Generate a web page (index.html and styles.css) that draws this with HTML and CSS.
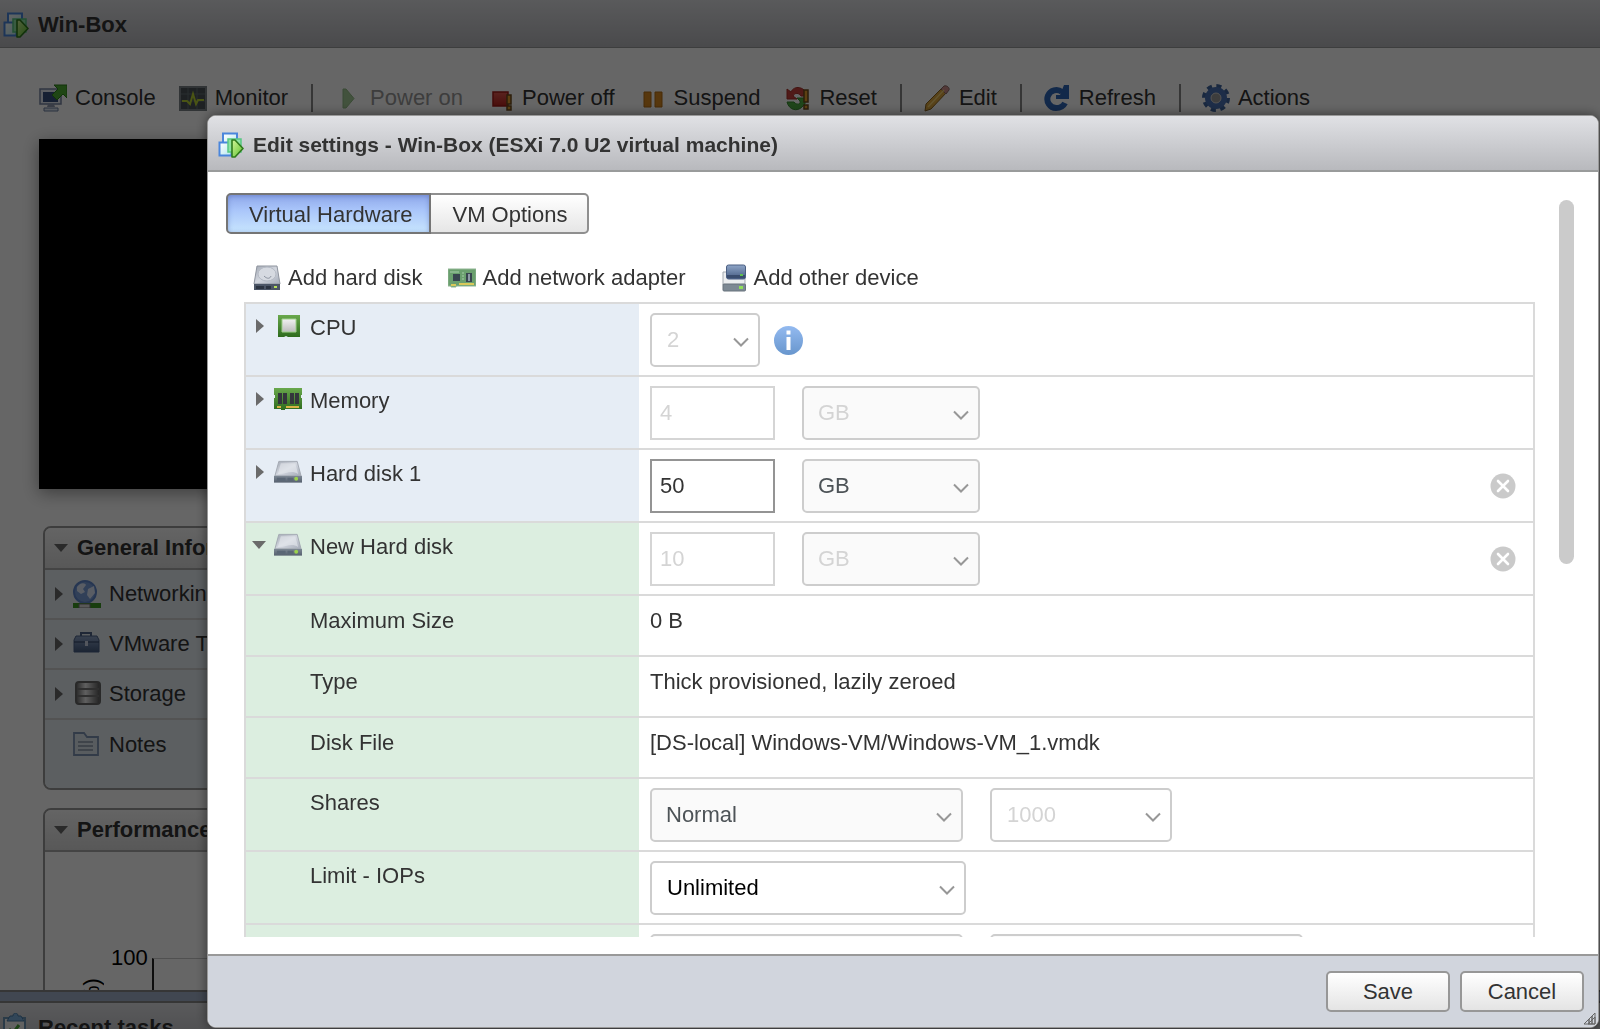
FILE: index.html
```html
<!DOCTYPE html>
<html lang="en">
<head>
<meta charset="utf-8">
<meta name="viewport" content="width=device-width, initial-scale=1">
<title>Win-Box</title>
<link rel="stylesheet" href="styles.css">
</head>
<body>
<svg class="defs" width="0" height="0" aria-hidden="true">
  <defs>
    <linearGradient id="g-lime" x1="0" y1="0" x2="1" y2="1"><stop offset="0" stop-color="#d3f59a"/><stop offset="1" stop-color="#5cc02c"/></linearGradient>
    <linearGradient id="g-ice" x1="0" y1="0" x2="1" y2="1"><stop offset="0" stop-color="#ffffff"/><stop offset="1" stop-color="#b5e6ee"/></linearGradient>
    <linearGradient id="g-metal" x1="0" y1="0" x2="1" y2="1"><stop offset="0" stop-color="#a3a9b4"/><stop offset=".5" stop-color="#d3d7df"/><stop offset="1" stop-color="#a4abb8"/></linearGradient>
    <linearGradient id="g-slate" x1="0" y1="0" x2="0" y2="1"><stop offset="0" stop-color="#7d8894"/><stop offset="1" stop-color="#56606e"/></linearGradient>
    <linearGradient id="g-green" x1="0" y1="0" x2="0" y2="1"><stop offset="0" stop-color="#69a84c"/><stop offset="1" stop-color="#2e6b1d"/></linearGradient>
    <linearGradient id="g-grey" x1="0" y1="0" x2="0" y2="1"><stop offset="0" stop-color="#f2f2f2"/><stop offset="1" stop-color="#bcbcbc"/></linearGradient>
    <linearGradient id="g-blue" x1="0" y1="0" x2="0" y2="1"><stop offset="0" stop-color="#93baf0"/><stop offset="1" stop-color="#6896cd"/></linearGradient>
    <linearGradient id="g-navy" x1="0" y1="0" x2="0" y2="1"><stop offset="0" stop-color="#8fa6c8"/><stop offset="1" stop-color="#445a80"/></linearGradient>
    <linearGradient id="g-drum" x1="0" y1="0" x2="1" y2="0"><stop offset="0" stop-color="#666"/><stop offset=".4" stop-color="#eee"/><stop offset="1" stop-color="#555"/></linearGradient>
    <linearGradient id="g-red" x1="0" y1="0" x2="0" y2="1"><stop offset="0" stop-color="#e05a50"/><stop offset="1" stop-color="#b8231d"/></linearGradient>
  </defs>
  <symbol id="i-vm" viewBox="0 0 26 26">
    <path d="M5 1.500h14v13H5z" fill="url(#g-ice)" stroke="#4a86dc" stroke-width="2"/>
    <path d="M1.500 10.500h12v13h-12z" fill="url(#g-ice)" stroke="#4a86dc" stroke-width="2"/>
    <path d="M10 7h13v13H10z" fill="#8fe3a4" stroke="#58c783" stroke-width="1.500"/>
    <path d="M14 8v17h3l8-8.500L17 8z" fill="url(#g-lime)" stroke="#2f7a1c" stroke-width="1.600" stroke-linejoin="round"/>
  </symbol>
  <symbol id="i-disk" viewBox="0 0 29 24">
    <path d="M5 1h19l4 15H1z" fill="url(#g-metal)" stroke="#a4a9b2" stroke-width="1"/>
    <path d="M7 3h15l3 11c-8-5-13 1-21 0z" fill="#e6e9ef" opacity=".6"/>
    <path d="M0 16h29v7H0z" fill="url(#g-slate)"/>
    <path d="M3 18h9v3H3zM14 18h6v3h-6z" fill="#5a6675"/>
    <circle cx="23" cy="19" r="2" fill="#9bd24c"/>
  </symbol>
  <symbol id="i-right" viewBox="0 0 14 14"><path d="M4 0v14l8-7z" fill="#6a6a6a"/></symbol>
  <symbol id="i-down" viewBox="0 0 14 14"><path d="M0 3h14l-7 8z" fill="#6a6a6a"/></symbol>
  <symbol id="i-chev" viewBox="0 0 16 10"><path d="M1 1.500 8 8.500l7-7" fill="none" stroke="#979797" stroke-width="2"/></symbol>
  <symbol id="i-remove" viewBox="0 0 26 26"><circle cx="13" cy="13" r="12.500" fill="#cacaca"/><path d="m8 8 10 10M18 8 8 18" stroke="#fff" stroke-width="2.600" stroke-linecap="round"/></symbol>
</svg>

<div class="page">
  <header class="titlebar page-title">
    <svg class="icon-vm"><use href="#i-vm"/></svg>
    <h1>Win-Box</h1>
  </header>
  <main class="host">
    <nav class="toolbar" aria-label="Virtual machine">
      <button type="button" class="tool"><svg class="ico" viewBox="0 0 28 28">
        <path d="M1 5h21v15H1z" fill="#e4e9f2" stroke="#7785a4" stroke-width="1.500"/><path d="M4 8h15v10H4z" fill="#37517f"/>
        <path d="M9 20h6l1 3h-8z" fill="#8f9ab0"/><path d="M5 24h14v3H5z" fill="#dbe4f0" stroke="#6c7ea0"/>
        <path d="M15 1h13v13l-4-4-6 6-5-5 6-6z" fill="#4fb034" stroke="#2c7f1a"/></svg>Console</button>
      <button type="button" class="tool"><svg class="ico" viewBox="0 0 28 28">
        <path d="M1 3h26v23H1z" fill="#4b5458" stroke="#7b8387" stroke-width="2"/><path d="M2 10h24M2 17h24M9 4v21M18 4v21" stroke="#657074"/>
        <path d="M3 17h5l3 3 3-10 3 10 2-4h6" fill="none" stroke="#b9d332" stroke-width="2"/></svg>Monitor</button>
      <span class="sep"></span>
      <button type="button" class="tool" disabled><svg class="ico" viewBox="0 0 28 28"><path d="M9 5v19h3l8-9.500-8-9.500z" fill="#8fc07f" stroke="#77aa68"/></svg>Power on</button>
      <button type="button" class="tool"><svg class="ico" viewBox="0 0 28 28"><path d="M7 8h15v14H7z" fill="url(#g-red)" stroke="#a31c18" stroke-width="1.500"/><path d="M21 11h4v9h-4zM21 22h4v4h-4z" fill="#e8a02e" stroke="#6e4b1c" stroke-width="1.500"/></svg>Power off</button>
      <button type="button" class="tool"><svg class="ico" viewBox="0 0 28 28"><path d="M6 8h7v15H6zM17 8h7v15h-7z" fill="#d98a22" stroke="#b36d12"/></svg>Suspend</button>
      <button type="button" class="tool"><svg class="ico" viewBox="0 0 28 28">
        <path d="M4 5v10h10l-4-3c2-4 6-3 8 0h6C22 2 11 1 8 8z" fill="#c8433c" stroke="#a8302a"/>
        <path d="M4 18c2 8 10 10 15 5l3-3v-6h-8l3 3c1 4-4 4-6 1z" fill="#4fae43" stroke="#3a8a33"/>
        <path d="M21 6h4v12h-4zM21 21h4v4h-4z" fill="#e8a02e" stroke="#6e4b1c" stroke-width="1.500"/></svg>Reset</button>
      <span class="sep"></span>
      <button type="button" class="tool"><svg class="ico" viewBox="0 0 28 28"><path d="m2 27 1-7L19 4l5 4L8 25z" fill="#dba53c" stroke="#8a6420"/><path d="m18 5 3-3c3-1 6 2 5 4l-3 4z" fill="#cf8f8c" stroke="#8c6a68"/><path d="m5 23 16-17" stroke="#f5d173" stroke-width="1.500"/></svg>Edit</button>
      <span class="sep"></span>
      <button type="button" class="tool"><svg class="ico" viewBox="0 0 28 28"><path d="M22 19c-2 4-5 5-9 5a9 9 0 1 1 6-16" fill="none" stroke="#2f66b8" stroke-width="6"/><path d="M21 1h5v14H13v-4h4z" fill="#2f66b8"/></svg>Refresh</button>
      <span class="sep"></span>
      <button type="button" class="tool"><svg class="ico" viewBox="0 0 28 28"><circle cx="14" cy="14" r="12" fill="none" stroke="#3f659f" stroke-width="4" stroke-dasharray="5 4.425"/><circle cx="14" cy="14" r="8" fill="#bfc6d3" stroke="#4a72b4" stroke-width="6"/><circle cx="14" cy="14" r="5" fill="#999" stroke="#ccc"/></svg>Actions</button>
    </nav>
    <div class="screen"></div>
    <section class="panel">
      <h2 class="panel-head"><svg class="tri"><use href="#i-down"/></svg>General Information</h2>
      <ul class="facts">
        <li><svg class="tri"><use href="#i-right"/></svg><svg class="ico" viewBox="0 0 28 28"><circle cx="12" cy="12" r="11" fill="#7ba0dd" stroke="#6088cc" stroke-width="2"/><path d="M4 7c4-5 8-4 9-2l-3 4 2 3-4 2-4-3zM15 9l6-3 1 7-5 6-3-4z" fill="#dfe9fb"/><path d="M0 23h28v5H0z" fill="#3c9a24"/><path d="M6 24h11v4H6z" fill="#ddd" stroke="#777"/></svg>Networking</li>
        <li><svg class="tri"><use href="#i-right"/></svg><svg class="ico" viewBox="0 0 28 28"><path d="M8 7V3h10v4" fill="none" stroke="#4e6388" stroke-width="2"/><path d="M3 6h21l2 4v12H1V10z" fill="url(#g-navy)" stroke="#4b6086"/><path d="M1 12h25" stroke="#2d3e60"/><path d="M12 11h3v5h-3z" fill="#cfd8e8"/></svg>VMware Tools</li>
        <li><svg class="tri"><use href="#i-right"/></svg><svg class="ico" viewBox="0 0 28 28"><rect x="3" y="2" width="24" height="22" rx="3" fill="url(#g-drum)" stroke="#666" stroke-width="2"/><path d="M4 9h22M4 16h22" stroke="#777" stroke-width="2"/></svg>Storage</li>
        <li><span class="tri"></span><svg class="ico" viewBox="0 0 28 28"><path d="M1 24V2h10l3 4h11v18z" fill="#dde5ee" stroke="#7d93b3" stroke-width="1.800"/><path d="M5 11h15M5 15h15M5 19h15" stroke="#8b97a8" stroke-width="1.500"/></svg>Notes</li>
      </ul>
    </section>
    <section class="panel chart-panel">
      <h2 class="panel-head"><svg class="tri"><use href="#i-down"/></svg>Performance summary</h2>
      <div class="chart"><span class="axis-name">CPU (%)</span><span class="tick">100</span><span class="plot"></span></div>
    </section>
  </main>
  <div class="splitter"></div>
  <footer class="tasks">
    <div class="titlebar page-title"><svg class="icon-task" viewBox="0 0 24 30"><path d="M1 5h21v24H1z" fill="#f4f4f4" stroke="#6d93b4" stroke-width="2"/><path d="M4 8 7 3h3c0-4 5-4 5 0h3l3 5z" fill="#7db0dc" stroke="#4a7ca8"/><path d="m6 16 4 4 6-8" fill="none" stroke="#4aa83a" stroke-width="3"/></svg><h2>Recent tasks</h2></div>
  </footer>
</div>

<div class="backdrop"></div>
<form class="dialog" role="dialog" aria-labelledby="dlg-title">
  <header class="titlebar dialog-title">
    <svg class="icon-vm"><use href="#i-vm"/></svg>
    <h2 id="dlg-title">Edit settings - Win-Box (ESXi 7.0 U2 virtual machine)</h2>
  </header>
  <div class="dialog-body">
    <div class="pane">
      <div class="tabs" role="tablist">
        <button type="button" class="tab tab-on" role="tab" aria-selected="true">Virtual Hardware</button>
        <button type="button" class="tab" role="tab" aria-selected="false">VM Options</button>
      </div>
      <div class="adders">
        <button type="button" class="add"><svg class="ico" viewBox="0 0 28 28"><path d="M4 2h20l3 18H1z" fill="url(#g-metal)" stroke="#8e949e"/><ellipse cx="14" cy="10" rx="9" ry="7" fill="#d6dae1" stroke="#b4bac4"/><path d="M11 12c3 3 6 3 7 0" fill="none" stroke="#8d94a0"/><path d="M1 20h26v6H1z" fill="#4b5566"/><path d="M3 22h8v3H3zM13 22h5v3h-5z" fill="#2c3442"/><path d="M21 22h3v2h-3z" fill="#b6df5a"/></svg>Add hard disk</button>
        <button type="button" class="add"><svg class="ico" viewBox="0 0 28 28"><path d="M0 5h28v17H8v1H3v-1H0z" fill="#6a9f6e" stroke="#8fb592"/><path d="M5 10h7v7H5zM18 9h6v9h-6z" fill="#38454f"/><path d="M2 8h9M14 9h2M14 12h2M14 15h2" stroke="#a6cda8"/><path d="M11 19h15v2H11zM3 20h5v2H3z" fill="#d9c95a"/><path d="M20 10h2v7h-2z" fill="#8d9aa6"/></svg>Add network adapter</button>
        <button type="button" class="add add-other"><svg class="ico" viewBox="0 0 28 28"><path d="M4 8h22v13H4z" fill="#eceef0" stroke="#a3a9b0"/><rect x="7.500" y="1" width="19" height="14" rx="2" fill="url(#g-navy)" stroke="#4b5f82"/><path d="M8 11h18v3H8z" fill="#3a4d6e"/><path d="M21 10h3v2h-3z" fill="#5fc04c"/><rect x="4" y="20" width="22.500" height="7" rx="1" fill="#7d8994" stroke="#68737d"/><path d="M20 22h4v3h-4z" fill="#8fe05a"/></svg>Add other device</button>
      </div>
      <table class="hw">
        <tbody>
          <tr>
            <th scope="row"><div class="label"><svg class="tri"><use href="#i-right"/></svg><svg class="ico" viewBox="0 0 28 28"><path d="M4 3h22v22H14l-2-1-2 1H4z" fill="url(#g-green)"/><path d="M8 7h14v13H8z" fill="url(#g-grey)" stroke="#9fcf8c"/></svg>CPU</div></th>
            <td><div class="ctl"><span class="sel w-cpu plain"><select aria-label="CPU" disabled><option>2</option></select><svg><use href="#i-chev"/></svg></span><svg class="info" viewBox="0 0 29 29" role="img" aria-label="Information"><circle cx="14.500" cy="14.500" r="14.500" fill="url(#g-blue)"/><path d="M12.500 4.500h4v4h-4zM12.500 11h4v13h-4z" fill="#fff"/></svg></div></td>
          </tr>
          <tr>
            <th scope="row"><div class="label"><svg class="tri"><use href="#i-right"/></svg><svg class="ico" viewBox="0 0 28 28"><path d="M0 3h28v7h-1v3h1v11H11v1H7v-1H0V13h1v-3H0z" fill="url(#g-green)"/><path d="M4 8h4v11H4zM9 8h4v11H9zM16 8h4v11h-4zM21 8h4v11h-4z" fill="#33363c"/><path d="M3 21h4v2H3zM12 21h13v2H12z" fill="#d8b245"/></svg>Memory</div></th>
            <td><div class="ctl"><input type="text" aria-label="Memory size" value="4" disabled><span class="sel w-unit"><select aria-label="Memory unit" disabled><option>GB</option></select><svg><use href="#i-chev"/></svg></span></div></td>
          </tr>
          <tr>
            <th scope="row"><div class="label"><svg class="tri"><use href="#i-right"/></svg><svg class="ico"><use href="#i-disk"/></svg>Hard disk 1</div></th>
            <td><div class="ctl"><input type="text" aria-label="Hard disk 1 size" value="50"><span class="sel w-unit"><select aria-label="Hard disk 1 unit"><option>GB</option></select><svg><use href="#i-chev"/></svg></span><button type="button" class="remove" aria-label="Remove hard disk 1"><svg><use href="#i-remove"/></svg></button></div></td>
          </tr>
          <tr class="new">
            <th scope="row"><div class="label"><svg class="tri"><use href="#i-down"/></svg><svg class="ico"><use href="#i-disk"/></svg>New Hard disk</div></th>
            <td><div class="ctl"><input type="text" aria-label="New hard disk size" value="10" disabled><span class="sel w-unit"><select aria-label="New hard disk unit" disabled><option>GB</option></select><svg><use href="#i-chev"/></svg></span><button type="button" class="remove" aria-label="Remove new hard disk"><svg><use href="#i-remove"/></svg></button></div></td>
          </tr>
          <tr class="new text-row"><th scope="row" class="sub">Maximum Size</th><td>0 B</td></tr>
          <tr class="new text-row"><th scope="row" class="sub">Type</th><td>Thick provisioned, lazily zeroed</td></tr>
          <tr class="new text-row"><th scope="row" class="sub">Disk File</th><td>[DS-local] Windows-VM/Windows-VM_1.vmdk</td></tr>
          <tr class="new"><th scope="row" class="sub">Shares</th>
            <td><div class="ctl"><span class="sel w-long"><select aria-label="Shares level"><option>Normal</option></select><svg><use href="#i-chev"/></svg></span><span class="sel w-num plain"><select aria-label="Shares value" disabled><option>1000</option></select><svg><use href="#i-chev"/></svg></span></div></td></tr>
          <tr class="new"><th scope="row" class="sub">Limit - IOPs</th>
            <td><div class="ctl"><span class="sel w-limit plain strong"><select aria-label="IOPs limit"><option>Unlimited</option></select><svg><use href="#i-chev"/></svg></span></div></td></tr>
          <tr class="new"><th scope="row" class="sub"></th>
            <td><div class="ctl"><span class="sel w-long"><select aria-label="Controller"></select></span><span class="sel w-long"><select aria-label="Controller location"></select></span></div></td></tr>
        </tbody>
      </table>
    </div>
    <div class="scroll-thumb"></div>
  </div>
  <footer class="dialog-foot">
    <button type="submit" class="btn">Save</button>
    <button type="button" class="btn">Cancel</button>
    <svg class="grip" viewBox="0 0 12 12"><path d="M11 0v11H0zM11 4v7H4z" fill="none" stroke="#666"/><path d="M8 3v8M5 6v5" stroke="#666" stroke-width="1.500"/></svg>
  </footer>
</form>
</body>
</html>
```

FILE: styles.css
```css
* { box-sizing: border-box; }

body {
  margin: 0;
  background: #fff;
  color: #333;
  font-family: "Liberation Sans", Arial, Helvetica, sans-serif;
  font-size: 22px;
  line-height: 28px;
  overflow: hidden;
}

h1, h2, ul { margin: 0; padding: 0; }
h1, h2 { font-size: 22px; line-height: 28px; font-weight: bold; }
button, input, select { font: inherit; color: inherit; }
svg { display: block; flex: none; }

.defs { position: absolute; }
.icon-vm { width: 26px; height: 26px; }
.icon-task { width: 24px; height: 30px; }
.ico { width: 28px; height: 28px; }
.tri { width: 14px; height: 14px; flex: none; }

/* Page behind the dialog */
.page { display: flex; flex-direction: column; height: 100vh; }

.titlebar {
  display: flex;
  flex: none;
  align-items: center;
  background: linear-gradient(#e0e1e5, #b8b9bd);
  border-bottom: 1px solid #999b9b;
}
.page-title { height: 48px; padding: 2px 0 0 3px; gap: 9px; }

.host { flex: 1; min-height: 0; overflow: hidden; }

.toolbar {
  display: flex;
  gap: 23px;
  padding: 36px 39px 27px;
  white-space: nowrap;
}
.tool, .add {
  display: flex;
  align-items: center;
  gap: 8px;
  padding: 0;
  border: 0;
  background: none;
}
.tool:disabled { color: #999; }
.tool:disabled .ico { opacity: .8; }
.sep { width: 2px; margin-right: -2px; background: #888; }

.screen {
  height: 350px;
  margin-left: 39px;
  width: 50%;
  background: #000;
  box-shadow: 0 4px 16px rgba(0, 0, 0, .4);
}

.panel {
  margin: 37px 43px 18px;
  border: 2px solid #999;
  border-radius: 8px;
  overflow: hidden;
}
.chart-panel { margin-top: 0; }
.panel-head {
  display: flex;
  align-items: center;
  gap: 9px;
  height: 42px;
  padding-left: 9px;
  background: linear-gradient(#fafafa, #dcdcdc);
  border-bottom: 2px solid #aaa;
}
.facts { list-style: none; background: #e5edf3; padding-bottom: 18px; }
.facts li {
  display: flex;
  align-items: center;
  height: 50px;
  padding-left: 6px;
  border-bottom: 2px solid #cfcfcf;
}
.facts li:last-child { border-bottom: 0; }
.facts .ico { margin: 0 8px; }

.chart { display: flex; height: 240px; padding: 92px 0 0 33px; color: #000; }
.axis-name {
  writing-mode: vertical-rl;
  transform: rotate(180deg);
  text-align: right;
  padding-bottom: 34px;
}
.tick { margin-left: 5px; }
.plot {
  flex: 1;
  margin: 14px 0 0 4px;
  border-left: 2px solid #222;
  border-top: 1px solid #c8c8c8;
}

.splitter {
  height: 13px;
  background: #a3b2ca;
  border-top: 2px solid #888;
  border-bottom: 2px solid #888;
}
.tasks { height: 26px; overflow: hidden; }
.tasks .titlebar { gap: 11px; }

.backdrop { position: fixed; inset: 0; background: rgba(0, 0, 0, .6); }

/* Dialog window */
.dialog {
  position: fixed;
  inset: 115px 1px 1px 207px;
  display: flex;
  flex-direction: column;
  background: #fff;
  border: 1px solid #999;
  border-radius: 9px;
  overflow: hidden;
  box-shadow: 0 0 12px rgba(0, 0, 0, .5);
}
.dialog-title { height: 56px; padding: 3px 0 0 10px; gap: 9px; border-bottom-width: 2px; }
.dialog-title h2 { font-size: 21px; }

.dialog-body {
  flex: 1;
  min-height: 0;
  display: flex;
  padding: 21px 24px 17px 18px;
}
.pane { flex: 1; min-width: 0; overflow: hidden; }
.scroll-thumb {
  width: 15px;
  height: 364px;
  margin-top: 7px;
  border-radius: 8px;
  background: #cbcbcb;
}

.tabs { display: flex; }
.tab {
  height: 41px;
  padding: 2px 20px 0 21px;
  border: 2px solid #8f8f8f;
  border-left-width: 0;
  border-radius: 0 5px 5px 0;
  background: linear-gradient(#fff, #e6e6e6);
}
.tab-on {
  padding-right: 17px;
  border-color: #757575;
  border-left-width: 2px;
  border-radius: 5px 0 0 5px;
  background: linear-gradient(#8fa8ea, #a9c5fa 40%, #c8e5fe);
  box-shadow: inset 0 1px 5px rgba(60, 80, 160, .4);
}

.adders { display: flex; gap: 25px; margin: 30px 0 10px 27px; }
.add { gap: 7px; white-space: nowrap; }
.add-other { margin-left: 8px; }

.hw {
  width: calc(100% - 42px);
  margin-left: 18px;
  table-layout: fixed;
  border-spacing: 0;
  border-left: 2px solid #dadada;
  border-right: 2px solid #dadada;
}
.hw th, .hw td {
  height: 73px;
  padding: 9px 11px 8px;
  border-top: 2px solid #dadada;
  vertical-align: top;
  text-align: left;
  font-weight: normal;
}
.hw th { width: 393px; padding: 10px 10px 8px 6px; background: #e6edf5; }
.hw .new th { background: #dceee0; }
.hw .text-row th, .hw .text-row td { height: 61px; padding-top: 11px; }
.hw th.sub { padding-left: 64px; }
.label { display: flex; align-items: center; height: 28px; }
.label .ico { margin: 0 8px 4px; }
.label .tri { margin-bottom: 4px; }

.ctl { display: flex; align-items: center; }
.ctl input {
  width: 125px;
  height: 54px;
  margin-right: 27px;
  padding: 0 8px;
  border: 2px solid #949494;
  border-radius: 0;
  background: #fff;
}
.ctl input:disabled { border-color: #d5d5d5; color: #d4d4d4; }

.sel { display: grid; align-items: center; margin-right: 27px; }
.sel select, .sel svg { grid-area: 1 / 1; }
.sel svg { width: 16px; height: 10px; justify-self: end; margin: 3px 11px 0 0; pointer-events: none; }
.sel select {
  width: 100%;
  height: 54px;
  padding: 0 14px;
  appearance: none;
  border: 2px solid #cdcdcd;
  border-radius: 5px;
  background: #fafafa;
  color: #4d5357;
}
.sel select:disabled { color: #d4d4d4; opacity: 1; }
.plain select { background: #fff; padding-left: 15px; }
.strong select { color: #000; }
.w-cpu { width: 110px; margin-right: 14px; }
.w-unit { width: 178px; }
.w-long { width: 313px; }
.w-limit { width: 316px; }
.w-num { width: 182px; }

.info { width: 29px; height: 29px; }
.remove { margin: 0 6px 0 auto; padding: 0; border: 0; background: none; }
.remove svg { width: 26px; height: 26px; }

.dialog-foot {
  display: flex;
  justify-content: flex-end;
  gap: 10px;
  height: 73px;
  padding: 15px 14px;
  background: #d1d5dd;
  border-top: 2px solid #999;
}
.btn {
  width: 124px;
  height: 41px;
  padding: 0;
  border: 2px solid #979797;
  border-radius: 5px;
  background: linear-gradient(#fff, #e4e4e4);
}
.grip { position: absolute; right: 2px; bottom: 2px; width: 12px; height: 12px; }
```
